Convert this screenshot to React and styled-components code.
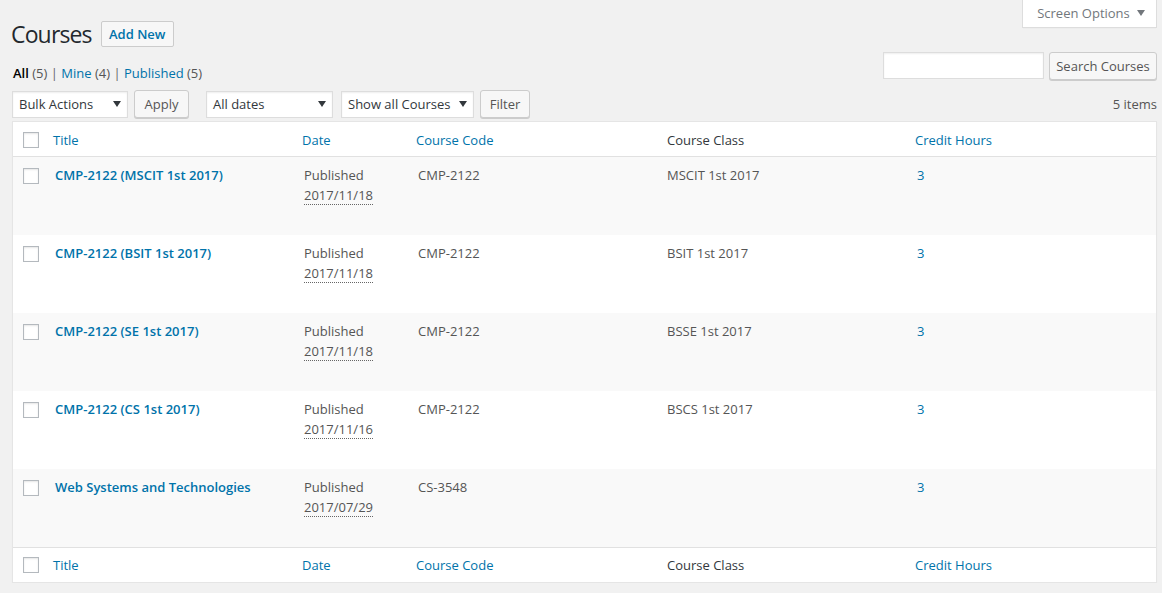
import React from 'react';
import styled, { createGlobalStyle } from 'styled-components';

const GlobalStyle = createGlobalStyle`
  body {
    margin: 0;
    background: #f1f1f1;
    font-family: "Open Sans", "Liberation Sans", sans-serif;
    font-size: 13px;
    color: #444;
  }
  * { box-sizing: border-box; }
`;

const Wrap = styled.div`
  padding: 0 5px 0 12px;
`;

const HeadRow = styled.div`
  display: flex;
  justify-content: space-between;
  align-items: flex-start;
`;

const TitleGroup = styled.div`
  display: flex;
  align-items: center;
  gap: 9px;
  margin-top: 21px;
`;

const PageTitle = styled.h1`
  margin: 0 0 0 -1px;
  font-size: 23px;
  font-weight: 400;
  letter-spacing: -0.85px;
  line-height: 26px;
  color: #23282d;
`;

const AddNew = styled.a`
  display: inline-block;
  height: 26px;
  width: 73px;
  text-align: center;
  border: 1px solid #ccc;
  border-radius: 2px;
  background: #f7f7f7;
  color: #0073aa;
  font-weight: 600;
  font-size: 13px;
  line-height: 24px;
  text-decoration: none;
`;

const ScreenTab = styled.div`
  width: 135px;
  height: 28px;
  background: #fff;
  border: 1px solid #ddd;
  border-top: none;
  box-shadow: 0 1px 1px -1px rgba(0, 0, 0, 0.1);
  color: #72777c;
  display: flex;
  align-items: center;
  justify-content: center;
  gap: 7px;
  padding: 0 0 1px 3px;
`;

const SubRow = styled.div`
  display: flex;
  justify-content: space-between;
  align-items: flex-start;
  margin-top: 5px;
`;

const SubSub = styled.ul`
  list-style: none;
  margin: 0;
  padding: 12px 0 0 1px;
  display: flex;
  line-height: 18px;
  color: #666;
`;

const SubItem = styled.li`
  white-space: pre;
`;

const SubLink = styled.a`
  color: ${p => (p.$current ? '#000' : '#0073aa')};
  font-weight: ${p => (p.$current ? 600 : 400)};
  text-decoration: none;
`;

const Count = styled.span`
  color: #555;
`;

const SearchBox = styled.div`
  display: flex;
  gap: 5px;
`;

const SearchInput = styled.div`
  width: 161px;
  height: 27px;
  background: #fff;
  border: 1px solid #ddd;
  box-shadow: inset 0 1px 2px rgba(0, 0, 0, 0.07);
`;

const Button = styled.button`
  height: 28px;
  width: ${p => p.$w}px;
  padding: 0 0 1px;
  border: 1px solid #ccc;
  border-radius: 3px;
  background: #f7f7f7;
  box-shadow: 0 1px 0 #ccc;
  color: #555;
  font-family: inherit;
  font-size: 13px;
  line-height: 26px;
  margin-left: ${p => p.$ml || 0}px;
`;

const TableNav = styled.div`
  display: flex;
  align-items: center;
  margin-top: 8px;
  height: 28px;
`;

const Select = styled.div`
  width: ${p => p.$w}px;
  height: 27px;
  margin-left: ${p => p.$ml || 0}px;
  background: #fff;
  border: 1px solid #ddd;
  box-shadow: inset 0 1px 2px rgba(0, 0, 0, 0.07);
  color: #32373c;
  display: flex;
  align-items: center;
  justify-content: space-between;
  padding: 0 6px 1px 6px;
`;

const Items = styled.div`
  margin-left: auto;
  color: #555;
`;

const Table = styled.div`
  margin-top: 3px;
  background: #fff;
  border: 1px solid #e5e5e5;
  box-shadow: 0 1px 1px rgba(0, 0, 0, 0.04);
`;

const cols = '32px 249px 114px 249px 250px 1fr';

const HeadLine = styled.div`
  display: grid;
  grid-template-columns: ${cols};
  height: 35px;
  align-items: center;
  padding-top: ${p => (p.$foot ? 0 : 1)}px;
  ${p => (p.$foot ? 'border-top: 1px solid #e1e1e1;' : 'border-bottom: 1px solid #e1e1e1;')}
`;

const Th = styled.div`
  padding: 0 ${p => (p.$sort ? 8 : 10)}px;
  color: ${p => (p.$sort ? '#0073aa' : '#32373c')};
  line-height: 20px;
`;

const Row = styled.div`
  display: grid;
  grid-template-columns: ${cols};
  height: 78px;
  background: ${p => (p.$alt ? '#f9f9f9' : '#fff')};
  align-items: start;
`;

const Td = styled.div`
  padding: 9px 10px 8px;
  line-height: 19.5px;
  color: ${p => (p.$link ? '#0073aa' : '#555')};
`;

const CheckCell = styled.div`
  padding: ${p => (p.$head ? '0 0 0 10px' : '11px 0 0 10px')};
  display: flex;
`;

const Check = styled.span`
  display: block;
  width: 16px;
  height: 16px;
  background: #fff;
  border: 1px solid #b4b9be;
  box-shadow: inset 0 1px 2px rgba(0, 0, 0, 0.1);
`;

const RowTitle = styled.a`
  color: #0073aa;
  font-size: 13px;
  font-weight: 600;
  text-decoration: none;
`;

const DateAbbr = styled.abbr`
  text-decoration: none;
  border-bottom: 1px dotted #666;
`;

const Arrow = ({ color = '#32373c' }) => (
  <svg width="8" height="6" viewBox="0 0 8 6">
    <path d="M0 0 L8 0 L4 6 Z" fill={color} />
  </svg>
);

const courses = [
  { title: 'CMP-2122 (MSCIT 1st 2017)', date: '2017/11/18', code: 'CMP-2122', cls: 'MSCIT 1st 2017' },
  { title: 'CMP-2122 (BSIT 1st 2017)', date: '2017/11/18', code: 'CMP-2122', cls: 'BSIT 1st 2017' },
  { title: 'CMP-2122 (SE 1st 2017)', date: '2017/11/18', code: 'CMP-2122', cls: 'BSSE 1st 2017' },
  { title: 'CMP-2122 (CS 1st 2017)', date: '2017/11/16', code: 'CMP-2122', cls: 'BSCS 1st 2017' },
  { title: 'Web Systems and Technologies', date: '2017/07/29', code: 'CS-3548', cls: '' },
];

function Header({ foot }) {
  return (
    <HeadLine $foot={foot}>
      <CheckCell $head><Check /></CheckCell>
      <Th $sort>Title</Th>
      <Th $sort>Date</Th>
      <Th $sort>Course Code</Th>
      <Th>Course Class</Th>
      <Th $sort>Credit Hours</Th>
    </HeadLine>
  );
}

export default function App() {
  return (
    <Wrap>
      <GlobalStyle />
      <HeadRow>
        <TitleGroup>
          <PageTitle>Courses</PageTitle>
          <AddNew>Add New</AddNew>
        </TitleGroup>
        <ScreenTab>
          Screen Options <Arrow color="#72777c" />
        </ScreenTab>
      </HeadRow>

      <SubRow>
        <SubSub>
          <SubItem><SubLink $current>All</SubLink> <Count>(5)</Count> | </SubItem>
          <SubItem><SubLink>Mine</SubLink> <Count>(4)</Count> | </SubItem>
          <SubItem><SubLink>Published</SubLink> <Count>(5)</Count></SubItem>
        </SubSub>
        <SearchBox>
          <SearchInput />
          <Button $w={108}>Search Courses</Button>
        </SearchBox>
      </SubRow>

      <TableNav>
        <Select $w={116}>Bulk Actions <Arrow /></Select>
        <Button $w={55} $ml={6}>Apply</Button>
        <Select $w={127} $ml={17}>All dates <Arrow /></Select>
        <Select $w={133} $ml={8}>Show all Courses <Arrow /></Select>
        <Button $w={50} $ml={6}>Filter</Button>
        <Items>5 items</Items>
      </TableNav>

      <Table>
        <Header />
        {courses.map((c, i) => (
          <Row key={c.title} $alt={i % 2 === 0}>
            <CheckCell><Check /></CheckCell>
            <Td><RowTitle>{c.title}</RowTitle></Td>
            <Td>
              Published<br />
              <DateAbbr>{c.date}</DateAbbr>
            </Td>
            <Td>{c.code}</Td>
            <Td>{c.cls}</Td>
            <Td $link>3</Td>
          </Row>
        ))}
        <Header foot />
      </Table>
    </Wrap>
  );
}
